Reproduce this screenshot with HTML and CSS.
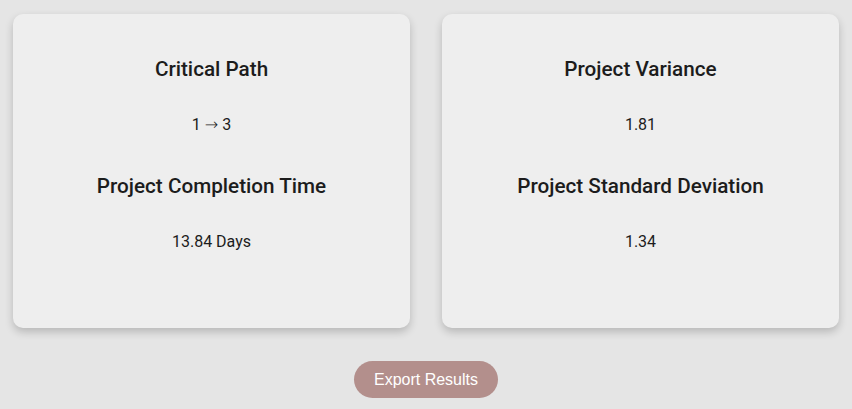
FILE: index.html
```html
<!DOCTYPE html>
<html lang="en">
<head>
<meta charset="utf-8">
<title>Results</title>
<link rel="stylesheet" href="styles.css">
</head>
<body>
<main class="page">
  <section class="cards">
    <div class="card">
      <h3 class="title">Critical Path</h3>
      <p class="value">1 <span class="arrow">→</span> 3</p>
      <h3 class="title second">Project Completion Time</h3>
      <p class="value">13.84 Days</p>
    </div>
    <div class="card">
      <h3 class="title">Project Variance</h3>
      <p class="value">1.81</p>
      <h3 class="title second">Project Standard Deviation</h3>
      <p class="value">1.34</p>
    </div>
  </section>
  <div class="actions">
    <button class="export">Export Results</button>
  </div>
</main>
</body>
</html>
```

FILE: styles.css
```css
html, body {
  margin: 0;
  padding: 0;
  background: #e5e5e5;
}
.page {
  display: flex;
  flex-direction: column;
  padding: 14px 13px 11px;
  font-family: Roboto, "Liberation Sans", sans-serif;
  color: #1c1c1c;
}
.cards {
  display: grid;
  grid-template-columns: 1fr 1fr;
  gap: 32px;
}
.card {
  background: #eeeeee;
  border-radius: 10px;
  box-shadow: 0 4px 9px rgba(0, 0, 0, 0.2);
  padding: 43px 20px 76px;
  display: flex;
  flex-direction: column;
  align-items: center;
  text-align: center;
}
.title {
  margin: 0;
  font-size: 20.7px;
  font-weight: 500;
  line-height: 24px;
}
.title.second {
  margin-top: 39px;
}
.value {
  margin: 34px 0 0;
  font-size: 16px;
  line-height: 20px;
  font-weight: 400;
}
.arrow {
  font-family: "DejaVu Sans", sans-serif;
  font-weight: 200;
  font-size: 16px;
}
.actions {
  display: flex;
  justify-content: center;
  margin-top: 33px;
}
.export {
  width: 144px;
  height: 37px;
  border: none;
  border-radius: 19px;
  background: #b38f8c;
  color: #ffffff;
  font-family: "Liberation Sans", Arial, sans-serif;
  font-size: 16px;
  padding: 0;
}
```
